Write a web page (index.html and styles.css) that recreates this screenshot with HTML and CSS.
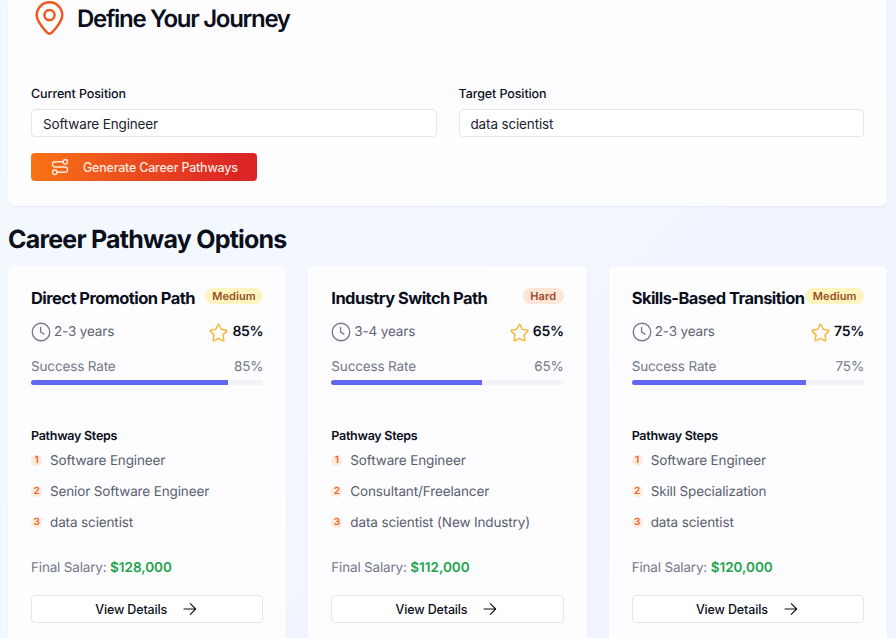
FILE: index.html
```
<!DOCTYPE html>
<html lang="en">
<head>
    <meta charset="UTF-8">
    <meta name="viewport" content="width=device-width, initial-scale=1.0">
    <title>Career Pathways</title>
    <link rel="stylesheet" href="styles.css">
</head>
<body>
    <!-- Shared icons -->
    <svg class="sprite">
        <symbol id="icon-clock" viewBox="0 0 24 24">
            <circle cx="12" cy="12" r="10.5"/>
            <path d="M11.500 6.500V12l4 2.500"/>
        </symbol>
        <symbol id="icon-star" viewBox="0 0 24 24">
            <path d="M11.100 2.500Q12 .8 12.900 2.500l2.500 5.400 6.100.9q1.900.4.600 1.800l-4.400 4.400 1.100 6.200q.2 1.900-1.500 1.100L12 19.400l-5.300 2.900q-1.700.8-1.500-1.100l1.100-6.200-4.400-4.400q-1.300-1.400.6-1.800l6.100-.9z"/>
        </symbol>
        <symbol id="icon-arrow" viewBox="0 0 24 24">
            <path d="M3 12h17.500M12.500 4l8 8-8 8"/>
        </symbol>
    </svg>

    <div class="container">
        <!-- Journey form -->
        <section class="card journey">
            <div class="journey-header">
                <svg class="pin" viewBox="0 0 24 24">
                    <path d="M20.300 9.800c0 3.400-2.300 6.700-6.600 11.200q-1.700 1.700-3.400 0C6 16.500 3.700 13.200 3.700 9.800a8.300 8.300 0 0 1 16.600 0z"/>
                    <circle cx="12" cy="9.800" r="3.300"/>
                </svg>
                <h2>Define Your Journey</h2>
            </div>
            <form>
                <div class="fields">
                    <div class="field">
                        <label for="current">Current Position</label>
                        <input type="text" id="current" value="Software Engineer">
                    </div>
                    <div class="field">
                        <label for="target">Target Position</label>
                        <input type="text" id="target" value="data scientist">
                    </div>
                </div>
                <button type="button" class="generate">
                    <svg class="route" viewBox="0 0 24 24">
                        <circle cx="19" cy="5" r="3"/>
                        <circle cx="5" cy="19" r="3"/>
                        <path d="M16 5H5.500a3.500 3.500 0 0 0 0 7h13a3.500 3.500 0 0 1 0 7H8"/>
                    </svg>
                    Generate Career Pathways
                </button>
            </form>
        </section>

        <h1>Career Pathway Options</h1>

        <!-- Pathway cards -->
        <div class="pathways">
            <article class="card pathway">
                <div class="title-row">
                    <h3>Direct Promotion Path</h3>
                    <span class="badge medium">Medium</span>
                </div>
                <div class="row meta">
                    <span class="time"><svg class="clock"><use href="#icon-clock"/></svg>2-3 years</span>
                    <span class="score"><svg class="star"><use href="#icon-star"/></svg>85%</span>
                </div>
                <div class="row rate"><span>Success Rate</span><span>85%</span></div>
                <div class="progress"><div class="bar" style="width: 85%"></div></div>
                <h4>Pathway Steps</h4>
                <ol>
                    <li><span class="num">1</span>Software Engineer</li>
                    <li><span class="num">2</span>Senior Software Engineer</li>
                    <li><span class="num">3</span>data scientist</li>
                </ol>
                <p class="salary">Final Salary: <strong>$128,000</strong></p>
                <button type="button" class="details">View Details<svg class="arrow"><use href="#icon-arrow"/></svg></button>
            </article>

            <article class="card pathway">
                <div class="title-row">
                    <h3>Industry Switch Path</h3>
                    <span class="badge hard">Hard</span>
                </div>
                <div class="row meta">
                    <span class="time"><svg class="clock"><use href="#icon-clock"/></svg>3-4 years</span>
                    <span class="score"><svg class="star"><use href="#icon-star"/></svg>65%</span>
                </div>
                <div class="row rate"><span>Success Rate</span><span>65%</span></div>
                <div class="progress"><div class="bar" style="width: 65%"></div></div>
                <h4>Pathway Steps</h4>
                <ol>
                    <li><span class="num">1</span>Software Engineer</li>
                    <li><span class="num">2</span>Consultant/Freelancer</li>
                    <li><span class="num">3</span>data scientist (New Industry)</li>
                </ol>
                <p class="salary">Final Salary: <strong>$112,000</strong></p>
                <button type="button" class="details">View Details<svg class="arrow"><use href="#icon-arrow"/></svg></button>
            </article>

            <article class="card pathway">
                <div class="title-row">
                    <h3>Skills-Based Transition</h3>
                    <span class="badge medium">Medium</span>
                </div>
                <div class="row meta">
                    <span class="time"><svg class="clock"><use href="#icon-clock"/></svg>2-3 years</span>
                    <span class="score"><svg class="star"><use href="#icon-star"/></svg>75%</span>
                </div>
                <div class="row rate"><span>Success Rate</span><span>75%</span></div>
                <div class="progress"><div class="bar" style="width: 75%"></div></div>
                <h4>Pathway Steps</h4>
                <ol>
                    <li><span class="num">1</span>Software Engineer</li>
                    <li><span class="num">2</span>Skill Specialization</li>
                    <li><span class="num">3</span>data scientist</li>
                </ol>
                <p class="salary">Final Salary: <strong>$120,000</strong></p>
                <button type="button" class="details">View Details<svg class="arrow"><use href="#icon-arrow"/></svg></button>
            </article>
        </div>
    </div>
</body>
</html>
```
FILE: styles.css
```
* { margin: 0; padding: 0; box-sizing: border-box; font-family: Inter, "Liberation Sans", sans-serif; }
html { height: 100%; overflow: hidden; }
body { height: 638px; overflow: hidden; background: linear-gradient(135deg, #f2f9fe 0%, #f3f8fe 45%, #eff4ff 65%, #f0f5ff 100%); color: #0b0f1c; text-rendering: geometricPrecision; }
svg { fill: none; stroke: currentColor; stroke-width: 1.6; stroke-linecap: round; stroke-linejoin: round; flex-shrink: 0; }
.sprite { display: none; }
.container { width: 879px; margin-left: 8px; }
.card { background: #fdfdff; box-shadow: 0 1px 2px rgba(30, 50, 100, 0.07); }

.journey { height: 206px; padding: 0 23px; border-radius: 0 0 7px 7px; }
.journey-header { display: flex; align-items: center; gap: 9px; height: 37px; }
.pin { width: 37px; height: 37px; color: #f0561d; }
h2 { font-size: 24px; line-height: 32px; font-weight: 640; letter-spacing: -1.3px; }
.fields { display: grid; grid-template-columns: 1fr 1fr; gap: 22px; margin-top: 48px; }
.field label { display: block; padding-top: 1px; font-size: 12.5px; line-height: 18px; font-weight: 550; letter-spacing: -0.1px; margin-bottom: 5px; }
.field input { display: block; width: 100%; height: 28px; padding: 1px 11px 0; border: 1px solid #e4e6eb; border-radius: 4px; background: #fff; color: #1b2130; font-size: 13.5px; letter-spacing: -0.15px; outline: none; }
.generate { display: flex; align-items: center; width: 226px; height: 28px; margin-top: 16px; padding-left: 20px; gap: 14px; border: none; border-radius: 4px; background: linear-gradient(90deg, #f97316, #dc2626 90%); color: #ffe9df; font-size: 12.5px; font-weight: 550; letter-spacing: -0.22px; white-space: nowrap; }
.route { width: 18px; height: 18px; stroke-width: 1.8; }

h1 { font-size: 25px; line-height: 32px; font-weight: 650; letter-spacing: -0.78px; margin: 18px 0 10px; }

.pathways { display: grid; grid-template-columns: repeat(3, 1fr); gap: 22px; }
.pathway { height: 400px; padding: 22px 23px 0; border-radius: 5px; }
.title-row { display: flex; justify-content: space-between; align-items: flex-start; height: 27px; white-space: nowrap; }
h3 { font-size: 16.5px; line-height: 21px; font-weight: 650; letter-spacing: -0.56px; }
.badge { height: 16px; padding: 0 7.500px; border-radius: 8px; font-size: 11px; line-height: 16px; font-weight: 600; letter-spacing: 0.1px; }
.medium { background: #fef4c0; color: #984f20; }
.hard { background: #fde5d8; color: #9e481f; }
.row { display: flex; justify-content: space-between; align-items: center; font-size: 13.5px; letter-spacing: -0.15px; }
.meta { height: 34px; line-height: 20px; }
.time, .score { display: flex; align-items: center; gap: 4px; }
.time { gap: 3px; color: #5d6471; }
.score { color: #0b0f1c; font-size: 14px; font-weight: 600; letter-spacing: -0.3px; }
.clock { width: 20px; height: 20px; color: #737985; }
.star { width: 19px; height: 19px; color: #f2b93b; stroke-width: 1.9; }
.rate { height: 34px; padding-top: 2px; color: #737985; }
.progress { height: 5px; margin-top: -3px; border-radius: 3px; background: #f2f3f6; overflow: hidden; }
.bar { height: 100%; background: #6366f1; }
h4 { margin-top: 43px; font-size: 12.5px; line-height: 18px; font-weight: 600; letter-spacing: -0.27px; }
ol { margin-top: -1px; list-style: none; }
li { display: flex; align-items: center; height: 31px; color: #59606d; font-size: 13.5px; letter-spacing: -0.13px; white-space: nowrap; }
.num { width: 11px; height: 11px; margin-right: 8px; border-radius: 50%; background: #ffeadb; color: #ed642d; font-size: 10px; line-height: 11px; font-weight: 600; text-align: center; }
.salary { margin-top: 19px; color: #737985; font-size: 13.5px; line-height: 22px; letter-spacing: -0.18px; }
.salary strong { color: #22a34a; font-weight: 600; letter-spacing: 0; }
.details { display: flex; align-items: center; justify-content: center; gap: 15px; width: 100%; height: 28px; margin-top: 16px; padding-right: 1px; border: 1px solid #e4e6eb; border-radius: 4px; background: #fff; color: #0b0f1c; font-size: 12.5px; font-weight: 550; letter-spacing: -0.15px; }
.arrow { width: 16px; height: 16px; }
```
